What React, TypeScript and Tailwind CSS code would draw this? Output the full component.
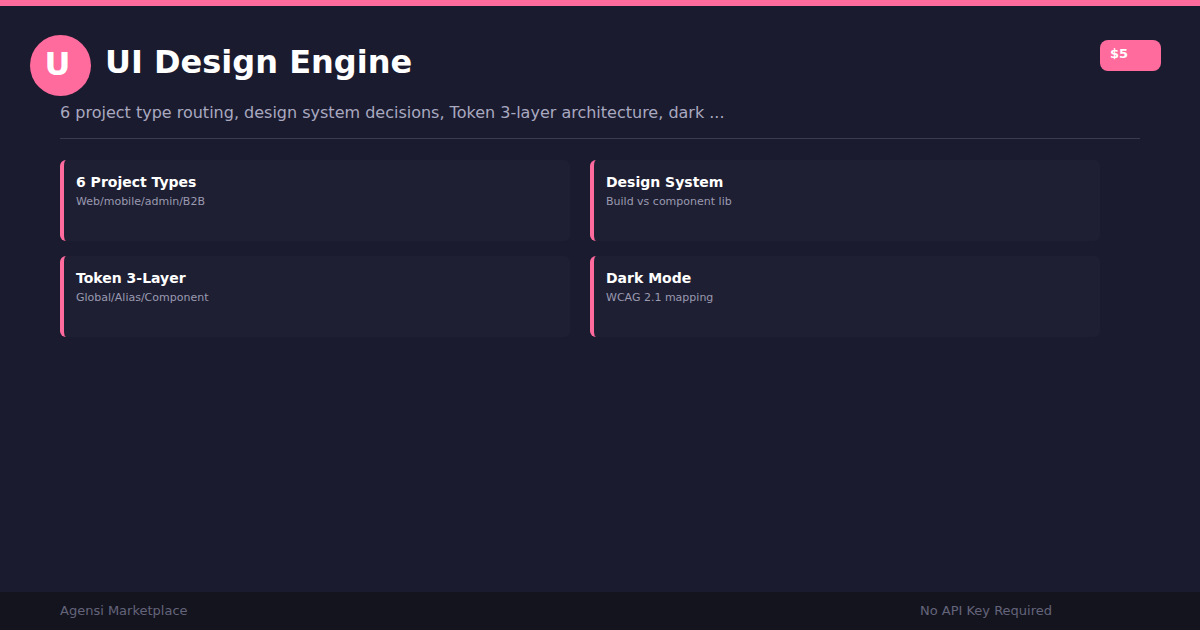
const features = [
  { title: "6 Project Types", desc: "Web/mobile/admin/B2B" },
  { title: "Design System", desc: "Build vs component lib" },
  { title: "Token 3-Layer", desc: "Global/Alias/Component" },
  { title: "Dark Mode", desc: "WCAG 2.1 mapping" },
];

export default function App() {
  return (
    <div className="w-[1200px] h-[630px] bg-[#1b1b2f] flex flex-col font-[DejaVu_Sans,sans-serif] overflow-hidden">
      <div className="h-[6px] bg-[#ff6b9d]" />
      <div className="flex-1 relative">
        <div className="absolute left-[1100px] top-[34px] w-[61px] h-[31px] rounded-lg bg-[#ff6b9d] text-white text-[13px] font-bold pl-[10px] pt-[7px] leading-none">
          $5
        </div>
        <div className="flex items-center gap-[14px] pl-[30px] pt-[29px]">
          <div className="w-[61px] h-[61px] rounded-full bg-[#ff6b9d] flex items-center justify-center pr-[6px] pb-[4px] text-white text-[32px] font-bold">
            U
          </div>
          <h1 className="text-white text-[32px] font-bold leading-none -mt-[8px]">UI Design Engine</h1>
        </div>
        <p className="ml-[60px] mt-[5px] text-[16px] text-[#a9a9c0]">
          6 project type routing, design system decisions, Token 3-layer architecture, dark ...
        </p>
        <div className="mx-[60px] mt-[13px] h-px bg-[#3a3a50]" />
        <div className="ml-[60px] mt-[21px] w-[1040px] grid grid-cols-2 gap-x-[20px] gap-y-[15px]">
          {features.map((f) => (
            <div key={f.title} className="h-[81px] rounded-md bg-[#1f1f33] border-l-4 border-[#ff6b9d] pl-[12px] pt-[12px]">
              <div className="text-white text-[14px] font-bold">{f.title}</div>
              <div className="text-[#9a9ab0] text-[11px] mt-[1px]">{f.desc}</div>
            </div>
          ))}
        </div>
      </div>
      <div className="h-[38px] bg-[#14141f] flex items-center text-[13px] text-[#64647a]">
        <span className="ml-[60px]">Agensi Marketplace</span>
        <span className="ml-auto mr-[148px]">No API Key Required</span>
      </div>
    </div>
  );
}
